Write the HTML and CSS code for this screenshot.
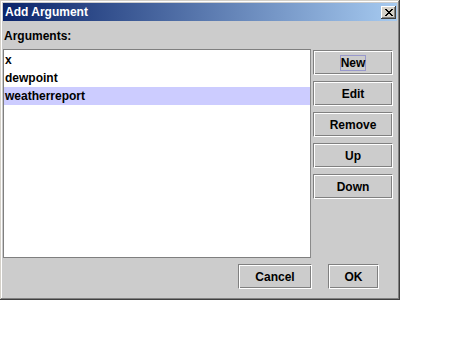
FILE: index.html
```html
<!DOCTYPE html>
<html>
<head>
<meta charset="utf-8">
<link rel="stylesheet" href="styles.css">
</head>
<body>
<div class="window">
  <div class="titlebar">
    <span class="title">Add Argument</span>
    <span class="close"><svg width="8" height="7" viewBox="0 0 8 7"><path d="M0 0h2v1h1v1h2v-1h1v-1h2v1h-1v1h-1v1h-1v1h1v1h1v1h1v1h-2v-1h-1v-1h-2v1h-1v1h-2v-1h1v-1h1v-1h1v-1h-1v-1h-1v-1h-1z" fill="#000"/></svg></span>
  </div>
  <div class="content">
    <div class="label">Arguments:</div>
    <div class="main">
      <div class="list">
        <div class="item">x</div>
        <div class="item">dewpoint</div>
        <div class="item selected">weatherreport</div>
      </div>
      <div class="side">
        <button class="btn side-btn"><span class="focus">New</span></button>
        <button class="btn side-btn">Edit</button>
        <button class="btn side-btn">Remove</button>
        <button class="btn side-btn">Up</button>
        <button class="btn side-btn">Down</button>
      </div>
    </div>
    <div class="footer">
      <button class="btn cancel">Cancel</button>
      <button class="btn ok">OK</button>
    </div>
  </div>
</div>
</body>
</html>
```

FILE: styles.css
```css
html, body {
  margin: 0;
  padding: 0;
  background: #ffffff;
}
body {
  font-family: "Liberation Sans", Arial, sans-serif;
  font-size: 12px;
  font-weight: bold;
}
.window {
  width: 400px;
  height: 300px;
  box-sizing: border-box;
  padding: 3px;
  background: #cccccc;
  display: flex;
  flex-direction: column;
  box-shadow: inset -1px -1px 0 #404040, inset 1px 1px 0 #d4d0c8, inset -2px -2px 0 #808080, inset 2px 2px 0 #ffffff;
}
.titlebar {
  height: 18px;
  flex: none;
  display: flex;
  align-items: center;
  justify-content: space-between;
  padding: 0 1px 0 2px;
  background: linear-gradient(to right, #0a246a, #a6caf0);
}
.title {
  color: #ffffff;
  line-height: 18px;
  font-size: 12px;
}
.close {
  width: 15px;
  height: 13px;
  box-sizing: border-box;
  background: #d4d0c8;
  display: flex;
  align-items: center;
  justify-content: center;
  box-shadow: inset -1px -1px 0 #404040, inset 1px 1px 0 #ffffff, inset -2px -2px 0 #808080;
}
.close svg {
  display: block;
}
.content {
  flex: 1;
  display: flex;
  flex-direction: column;
  padding-top: 8px;
}
.label {
  line-height: 14px;
  height: 14px;
  padding-left: 1px;
  color: #000;
  margin-bottom: 6px;
}
.main {
  display: flex;
  gap: 2px;
}
.list {
  width: 308px;
  height: 209px;
  box-sizing: border-box;
  background: #ffffff;
  border: 1px solid #7f7f7f;
  border-right-color: #8a8a8a;
  padding-top: 1px;
}
.item {
  height: 18px;
  line-height: 18px;
  padding-left: 1px;
  color: #000;
}
.item.selected {
  background: #ccccff;
}
.side {
  display: flex;
  flex-direction: column;
  gap: 6px;
  padding-top: 1px;
}
.btn {
  font-family: "Liberation Sans", Arial, sans-serif;
  font-size: 12px;
  font-weight: bold;
  color: #000;
  background: #cccccc;
  box-sizing: border-box;
  height: 25px;
  padding: 0;
  margin: 0;
  border: 1px solid;
  border-color: #808080 #ffffff #ffffff #808080;
  box-shadow: inset 1px 1px 0 #ffffff, inset -1px -1px 0 #808080;
  display: flex;
  align-items: center;
  justify-content: center;
  line-height: 14px;
}
.side-btn {
  width: 80px;
}
.focus {
  border: 1px solid #9999cc;
  margin: -1px;
  line-height: 14px;
  padding: 0 0 0 0;
}
.footer {
  display: flex;
  justify-content: flex-end;
  gap: 16px;
  margin-top: 6px;
  padding-right: 18px;
}
.cancel {
  width: 74px;
}
.ok {
  width: 51px;
}
```
